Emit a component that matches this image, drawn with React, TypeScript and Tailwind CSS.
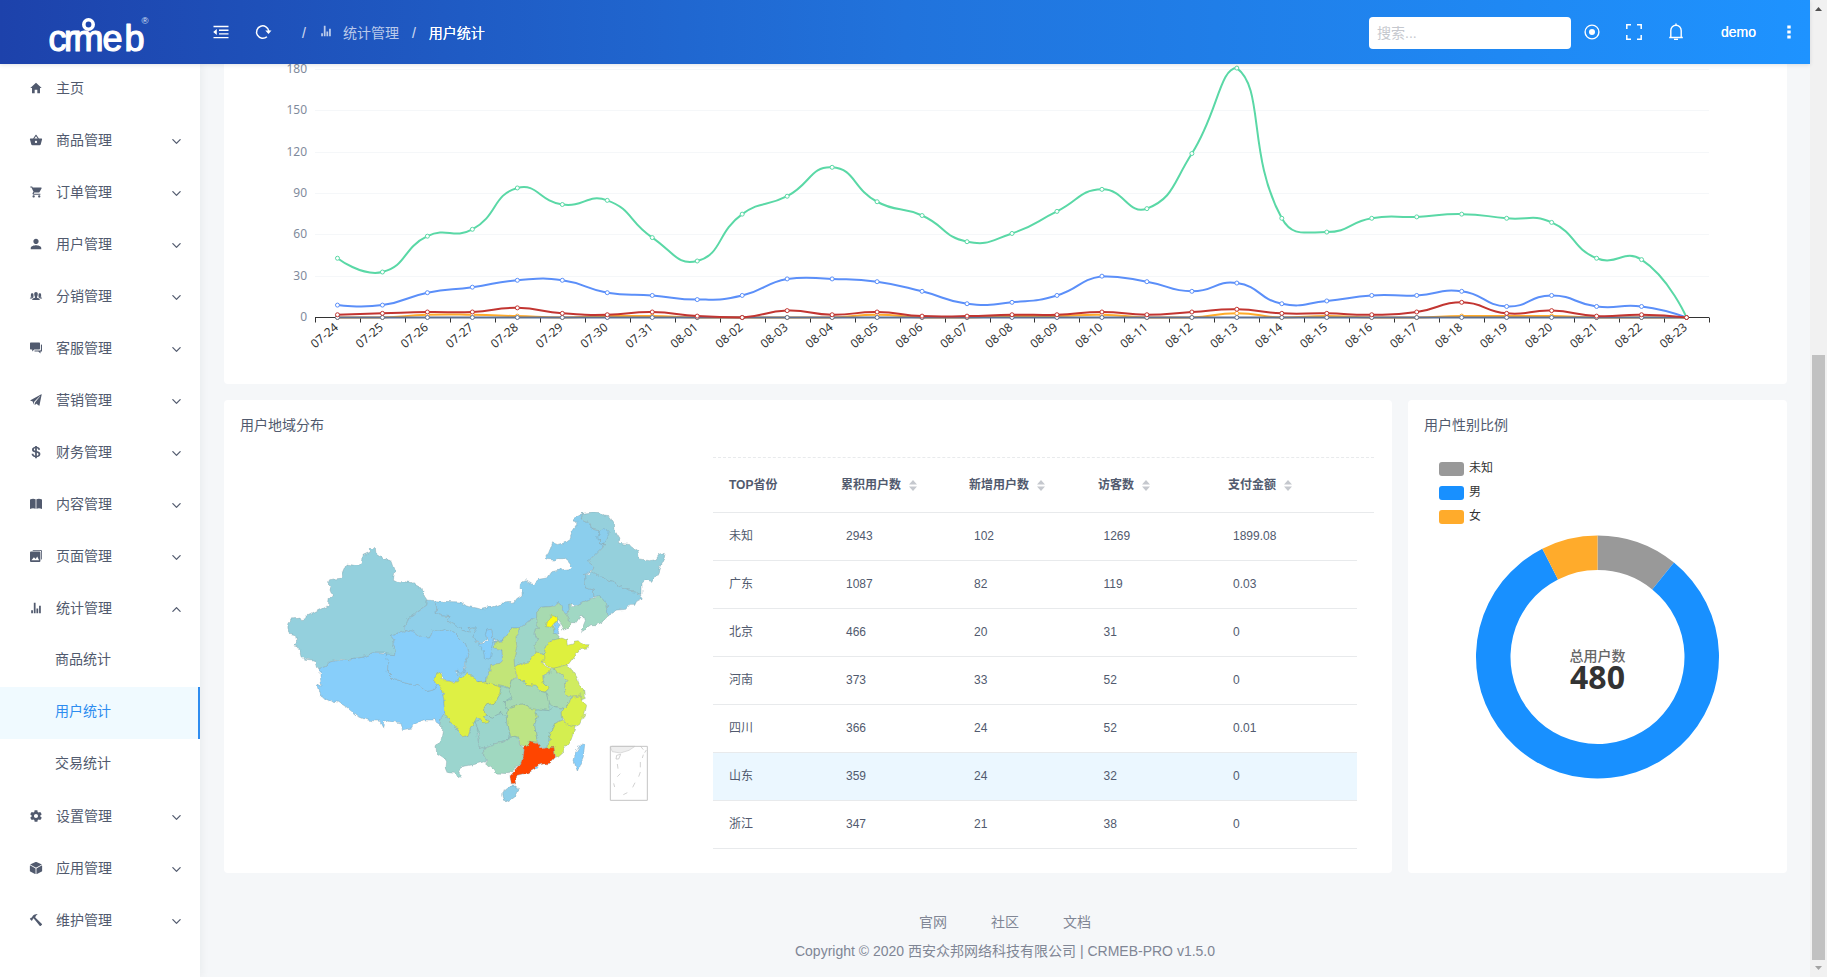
import React from "react";
import {
  IoMdHome,
  IoMdBasket,
  IoMdCart,
  IoMdPerson,
  IoIosPeople,
  IoIosPaperPlane,
  IoLogoUsd,
  IoMdStats,
  IoMdSettings,
  IoMdCube,
  IoMdHammer,
  IoIosArrowDown,
  IoIosArrowUp,
} from "react-icons/io";

type Icon = React.ComponentType<{ className?: string }>;

const ChatIcon: Icon = ({ className }) => (
  <svg viewBox="0 0 14 14" className={className} fill="currentColor">
    <path d="M1.700 1.500h8.600q.7 0 .7.700v5.600q0 .7-.7.700H5.200L3.200 10.400V8.500H1.700Q1 8.500 1 7.800V2.200q0-.7.700-.7z" />
    <path d="M11.900 3.500h.5q.6 0 .6.600v5.800q0 .6-.6.600h-.9v2L9.300 10.500H5.500v-1h5.700q.7 0 .7-.7z" />
  </svg>
);

const BookIcon: Icon = ({ className }) => (
  <svg viewBox="0 0 14 14" className={className} fill="currentColor">
    <path d="M1 2.600Q3.900 1 6.600 2.300v9.500Q3.900 10.500 1 12zM13 2.600Q10.100 1 7.400 2.300v9.500Q10.100 10.500 13 12z" />
  </svg>
);

const AlbumIcon: Icon = ({ className }) => (
  <svg viewBox="0 0 14 14" className={className} fill="currentColor">
    <path d="M4.300 1h7.500Q13 1 13 2.200v7.500q0 .8-.8.900V2.800q0-1-1-1H3.500Q3.600 1 4.300 1z" />
    <path
      fillRule="evenodd"
      d="M2 2.600h8.400q1 0 1 1V12q0 1-1 1H2q-1 0-1-1V3.600q0-1 1-1zm.4 8.600h7.700L8.200 7.600 6.700 10 4.900 8.200z"
    />
  </svg>
);

const menu: { label: string; icon: Icon; open?: boolean; leaf?: boolean }[] = [
  { label: "主页", icon: IoMdHome, leaf: true },
  { label: "商品管理", icon: IoMdBasket },
  { label: "订单管理", icon: IoMdCart },
  { label: "用户管理", icon: IoMdPerson },
  { label: "分销管理", icon: IoIosPeople },
  { label: "客服管理", icon: ChatIcon },
  { label: "营销管理", icon: IoIosPaperPlane },
  { label: "财务管理", icon: IoLogoUsd },
  { label: "内容管理", icon: BookIcon },
  { label: "页面管理", icon: AlbumIcon },
  { label: "统计管理", icon: IoMdStats, open: true },
  { label: "设置管理", icon: IoMdSettings },
  { label: "应用管理", icon: IoMdCube },
  { label: "维护管理", icon: IoMdHammer },
];
const subMenu = ["商品统计", "用户统计", "交易统计"];

function Logo() {
  return (
    <svg width="200" height="64" viewBox="0 0 200 64" className="shrink-0">
      <text
        x="48.500 64 73.500 102.500 124.500"
        y="51"
        fontSize="36"
        fill="#fff"
        stroke="#fff"
        strokeWidth="1.200"
        strokeLinejoin="round"
        className="font-['Liberation_Sans',sans-serif]"
      >
        crmeb
      </text>
      <circle cx="88.500" cy="24.500" r="4.700" fill="none" stroke="#fff" strokeWidth="3.600" />
      <text x="141.500" y="23.500" fontSize="9.500" fill="#dbe3f6" className="font-['Liberation_Sans',sans-serif]">
        ®
      </text>
    </svg>
  );
}

function Header() {
  return (
    <header className="relative z-10 flex h-16 shrink-0 items-center bg-[linear-gradient(90deg,#1d42ab,#2173dc,#1e93ff)] text-sm text-white shadow-[0_1px_4px_rgba(0,21,41,0.12)]">
      <Logo />
      <svg width="16" height="16" viewBox="0 0 16 16" className="ml-[13px] fill-white">
        <path d="M.5 1.800h15v1.400H.5zM6 5.600h9.500v1.300H6zM6 9.200h9.500v1.300H6zM.5 12.900h15v1.400H.5zM.2 8l3.600-2.900v5.800z" />
      </svg>
      <svg width="17" height="16" viewBox="0 0 17 16" className="ml-[26px]">
        <path d="M11.900 12.700A6.200 6.200 0 1 1 13.900 7.200" fill="none" stroke="#fff" strokeWidth="1.500" />
        <path d="M10.300 6.600h6.200l-3 3.500z" fill="#fff" />
      </svg>
      <span className="ml-[30px] pt-0.5 text-white/80">/</span>
      <IoMdStats className="mt-[-3px] ml-[13px] size-[14px] text-white/70" />
      <span className="ml-[10px] pt-0.5 text-white/70">统计管理</span>
      <span className="ml-[13px] pt-0.5 text-white/80">/</span>
      <span className="ml-[13px] pt-0.5 [text-shadow:0_0_.5px_#fff]">用户统计</span>
      <div className="ml-auto flex items-center">
        <div className="mt-0.5 flex h-8 w-[202px] items-center rounded bg-white pl-[8px] text-[#c5c8ce]">搜索...</div>
        <svg width="16" height="16" viewBox="0 0 16 16" className="ml-[13px]">
          <circle cx="8" cy="8" r="6.900" fill="none" stroke="#fff" strokeWidth="1.400" />
          <circle cx="8" cy="8" r="3" fill="#fff" />
        </svg>
        <svg width="16" height="16" viewBox="0 0 16 16" className="ml-[26px] fill-none stroke-white stroke-[1.5]">
          <path d="M.8 5V.8H5M11 .8h4.200V5M15.200 11v4.200H11M5 15.200H.8V11" />
        </svg>
        <svg width="16" height="18" viewBox="0 0 16 18" className="ml-[26px] fill-none stroke-white stroke-[1.4]">
          <path d="M1.200 14.500h13.600M2.800 14.500V7.500a5.200 5.200 0 0 1 10.400 0v7M8 .6v2M6 16.400h4" />
        </svg>
        <span className="ml-[37px] w-[36px] font-['Liberation_Sans',sans-serif] [text-shadow:0_0_.5px_#fff]">demo</span>
        <svg width="4" height="14" viewBox="0 0 4 14" className="mr-[19px] ml-[30px] fill-white">
          <path d="M.3.500h3.400v3H.3zM.3 5.500h3.400v3H.3zM.3 10.500h3.400v3H.3z" />
        </svg>
      </div>
    </header>
  );
}

function Sidebar() {
  return (
    <nav className="z-[5] w-[200px] shrink-0 bg-white text-sm text-[#515a6e] shadow-[2px_0_8px_rgba(29,35,41,0.05)]">
      <div className="-mt-0.5">
        {menu.map(({ label, icon: ItemIcon, open, leaf }) => (
          <React.Fragment key={label}>
            <div className="flex h-[52px] items-center pr-[17px] pl-[29px]">
              <ItemIcon className="size-[14px]" />
              <span className="ml-[13px]">{label}</span>
              {!leaf &&
                (open ? (
                  <IoIosArrowUp className="mt-[3px] ml-auto size-[13px]" />
                ) : (
                  <IoIosArrowDown className="mt-[3px] ml-auto size-[13px]" />
                ))}
            </div>
            {open && (
              <div className="mt-px -mb-px">
                {subMenu.map((s, i) => (
                  <div
                    key={s}
                    className={
                      i === 1
                        ? "flex h-[52px] items-center border-r-2 border-[#2d8cf0] bg-[#f0faff] pb-[5px] pl-[55px] text-[#2d8cf0]"
                        : "flex h-[52px] items-center pb-[5px] pl-[55px]"
                    }
                  >
                    {s}
                  </div>
                ))}
              </div>
            )}
          </React.Fragment>
        ))}
      </div>
    </nav>
  );
}

const dates = [
  "07-24", "07-25", "07-26", "07-27", "07-28", "07-29", "07-30", "07-31",
  "08-01", "08-02", "08-03", "08-04", "08-05", "08-06", "08-07", "08-08",
  "08-09", "08-10", "08-11", "08-12", "08-13", "08-14", "08-15", "08-16",
  "08-17", "08-18", "08-19", "08-20", "08-21", "08-22", "08-23",
];
const series = [
  { color: "#5b8ff9", data: [9, 9, 18, 22, 27, 27, 18, 16, 13, 16, 28, 28, 26, 19, 10, 11, 16, 30, 26, 19, 25, 10, 12, 16, 16, 19, 8, 16, 8, 8, 0] },
  { color: "#5ad8a6", data: [43, 33, 59, 64, 94, 82, 85, 58, 41, 75, 88, 109, 84, 74, 55, 61, 77, 93, 79, 119, 181, 72, 62, 72, 73, 75, 72, 69, 43, 42, 0] },
  { color: "#ffab2b", data: [0, 0, 2, 2, 1, 0, 1, 1, 0, 0, 0, 0, 2, 0, 0, 1, 1, 2, 0, 0, 3, 0, 1, 0, 0, 1, 1, 1, 0, 0, 0] },
  { color: "#5d7092", data: dates.map(() => 0) },
  { color: "#c23531", data: [2, 3, 4, 4, 7, 3, 2, 4, 1, 0, 5, 2, 4, 1, 1, 2, 2, 4, 2, 4, 6, 3, 3, 2, 4, 11, 3, 5, 1, 2, 0] },
];

const AXIS_Y = 317.5;
const AXIS_X0 = 315;
const AXIS_X1 = 1709;
const STEP = (AXIS_X1 - AXIS_X0) / dates.length;
type Pt = [number, number];
const toPoint = (v: number, i: number): Pt => [AXIS_X0 + STEP * (i + 0.5), AXIS_Y - v * 1.378];

/* Cubic curve whose control points follow the neighbouring chord, clamped to the series' bounds. */
function smoothPath(points: Pt[]) {
  const ys = points.map((p) => p[1]);
  const lo = Math.min(...ys);
  const hi = Math.max(...ys);
  const clamp = (y: number) => Math.max(lo, Math.min(hi, y));
  let d = `M${points[0][0]} ${points[0][1]}`;
  let c0: Pt = points[0];
  for (let i = 1; i < points.length; i++) {
    const p = points[i];
    const prev = points[i - 1];
    const next = points[i + 1];
    let c1: Pt = p;
    let nextC0: Pt = p;
    if (next) {
      const v: Pt = [next[0] - prev[0], next[1] - prev[1]];
      const a = Math.hypot(p[0] - prev[0], p[1] - prev[1]);
      const b = Math.hypot(next[0] - p[0], next[1] - p[1]);
      const r = b / (a + b);
      c1 = [p[0] - v[0] * 0.5 * (1 - r), clamp(p[1] - v[1] * 0.5 * (1 - r))];
      nextC0 = [p[0] + v[0] * 0.5 * r, clamp(p[1] + v[1] * 0.5 * r)];
    }
    d += `C${c0[0]} ${c0[1]} ${c1[0]} ${c1[1]} ${p[0]} ${p[1]}`;
    c0 = nextC0;
  }
  return d;
}

function TrendChart() {
  return (
    <svg
      width="1563"
      height="320"
      viewBox="224 64 1563 320"
      className="block font-['Noto_Sans','Noto_Sans_CJK_SC',sans-serif] text-xs"
    >
      {[0, 30, 60, 90, 120, 150, 180].map((v) => {
        const y = Math.round(AXIS_Y - 0.5 - v * 1.378) + 0.5;
        return (
          <g key={v}>
            {v > 0 && <path d={`M${AXIS_X0} ${y}H${AXIS_X1}`} stroke="#f5f7f9" />}
            <text x="307" y={y + 3} textAnchor="end" fill="#7f8b9c">
              {v}
            </text>
          </g>
        );
      })}
      <path d={`M${AXIS_X0} ${AXIS_Y}H${AXIS_X1}`} stroke="#333" />
      {Array.from({ length: dates.length + 1 }, (_, i) => {
        const x = Math.round(AXIS_X0 + i * STEP) + 0.5;
        return <path key={i} d={`M${x} ${AXIS_Y}v5`} stroke="#333" />;
      })}
      {dates.map((t, i) => {
        const x = AXIS_X0 + STEP * (i + 0.5) - 1;
        return (
          <text
            key={t}
            x={x}
            y="329.500"
            textAnchor="end"
            fill="#333"
            transform={`rotate(-40 ${x} 325.500)`}
          >
            {t}
          </text>
        );
      })}
      {series.map(({ color, data }) => {
        const pts = data.map(toPoint);
        return (
          <g key={color} stroke={color}>
            <path d={smoothPath(pts)} fill="none" strokeWidth="2" />
            {pts.map(([x, y]) => (
              <circle key={x} cx={x} cy={y} r="2" fill="#fff" strokeWidth="1" />
            ))}
          </g>
        );
      })}
    </svg>
  );
}

const provinces: [string, string, string][] = [
  ["西藏", "#87cefa", "150,536 168,528 178,516 210,510 240,512 246,505 276,502 312,486 350,490 354,520 352,550 370,568 410,580 450,588 472,604 490,600 496,580 512,590 520,620 526,672 512,684 510,704 498,696 494,682 488,690 460,690 430,704 422,718 398,722 394,700 370,694 354,690 342,694 338,710 330,694 290,690 262,678 230,652 200,632 196,642 182,632 154,620 148,600 144,586 156,590 150,560"],
  ["新疆", "#94d0dd", "53,402 62,388 90,384 95,392 108,390 112,378 175,346 178,325 187,318 180,300 183,288 173,278 176,272 212,268 218,262 216,250 228,222 268,228 274,222 276,196 298,186 298,175 316,176 318,190 344,208 366,214 375,240 370,268 382,274 420,277 456,294 460,310 473,328 470,346 460,352 444,362 428,378 412,384 408,398 404,414 410,420 400,426 362,436 372,450 366,462 376,478 374,494 350,494 340,486 312,486 276,502 246,505 240,512 210,508 178,516 168,528 150,536 140,530 134,510 108,508 96,500 92,482 84,470 72,468 80,454 76,434 58,430 54,416"],
  ["内蒙古", "#8bceed", "490,332 520,334 572,336 590,348 620,354 634,358 660,352 690,340 734,336 740,326 756,316 756,300 750,292 752,278 768,272 788,284 806,268 830,264 842,246 868,240 900,236 906,230 896,216 884,206 862,206 850,210 830,208 828,200 836,188 848,158 864,164 890,156 898,150 908,124 920,106 920,92 912,90 914,82 938,70 934,90 956,98 966,118 988,122 984,140 990,156 1004,162 998,174 980,192 956,216 972,230 962,246 944,254 946,282 950,294 970,300 972,320 958,328 936,336 920,348 904,344 896,346 898,358 888,370 876,360 868,338 850,348 840,350 812,352 800,364 800,384 770,396 748,414 726,414 708,432 702,452 680,456 672,450 664,444 668,430 664,418 652,420 648,450 632,460 612,452 608,436 618,424 614,414 600,416 596,426 578,422 542,400 532,392 540,380 516,378 498,370 500,354"],
  ["甘肃", "#8fcfe9", "473,330 490,332 500,354 498,370 516,378 540,380 532,392 542,400 566,412 578,422 596,426 600,416 614,414 618,424 608,440 618,456 636,462 668,456 678,456 676,474 696,480 698,512 690,520 662,524 660,544 652,556 650,576 624,578 614,564 598,556 590,545 584,560 575,566 564,560 560,540 580,540 586,516 596,494 584,458 556,430 524,420 504,424 488,420 484,434 478,444 452,442 432,426 410,420 404,414 412,384 428,378 444,362 470,346"],
  ["青海", "#87cefa", "362,436 400,426 410,420 432,426 452,442 478,444 484,434 488,420 504,424 524,420 556,430 584,458 596,494 586,516 580,530 582,548 572,550 566,541 556,542 564,556 576,562 568,580 540,574 522,570 512,548 496,550 494,576 500,584 490,600 472,604 450,588 410,580 370,568 352,550 354,520 348,500 350,492 374,494 376,478 366,462 372,450"],
  ["黑龙江", "#95d0dc", "938,70 970,66 990,68 1002,78 1018,80 1030,100 1032,120 1044,140 1050,160 1080,164 1104,182 1108,206 1138,212 1158,208 1166,196 1186,190 1178,216 1170,230 1164,248 1148,274 1126,270 1116,280 1116,312 1104,312 1098,304 1072,300 1054,288 1042,292 1034,274 1014,272 1002,264 982,256 976,248 966,244 972,230 956,216 980,192 998,174 1004,162 990,156 984,140 988,122 966,118 956,98 934,90"],
  ["加格达奇", "#8bceed", "988,122 1002,114 1018,124 1016,134 1006,148 1002,160 992,158 990,148 982,150 980,140 988,136"],
  ["吉林", "#8fcfe4", "944,254 962,252 966,244 976,248 982,256 1002,264 1014,272 1034,274 1042,292 1054,288 1072,300 1098,304 1104,312 1116,314 1112,330 1100,334 1094,346 1080,346 1070,358 1040,360 1014,378 1006,340 988,318 972,320 970,300 950,294 946,282"],
  ["辽宁", "#a0d8c4", "896,342 904,344 904,356 920,348 936,336 958,328 988,318 1000,326 1006,340 1014,378 1008,388 980,404 966,404 932,428 936,416 946,392 944,380 930,380 918,398 904,398 888,370 898,358"],
  ["河北", "#a7dab0", "800,364 812,352 840,350 852,348 868,338 876,360 888,370 904,398 892,416 880,420 872,404 862,392 852,404 852,424 868,436 866,446 840,452 826,474 822,492 794,490 794,466 802,446 792,430 796,416 808,412 800,400"],
  ["天津", "#87cefa", "852,412 858,396 868,404 864,416 870,432 852,430"],
  ["北京", "#fcfc14", "826,410 828,398 840,388 844,376 858,380 860,394 852,404 846,412"],
  ["山西", "#9dd6c9", "748,414 770,396 800,384 800,400 808,412 796,416 792,430 802,446 794,466 794,490 780,514 734,530 732,500 740,470 738,440 746,430"],
  ["陕西", "#c2e578", "748,414 746,430 738,440 740,470 732,500 734,530 742,566 724,570 716,600 700,590 680,586 662,582 650,576 652,556 660,544 662,524 690,520 698,512 696,480 676,474 678,456 702,452 708,432 726,414"],
  ["宁夏", "#87cefa", "650,420 664,418 668,430 664,444 672,450 668,474 664,488 660,510 644,508 640,482 626,464 640,460 652,452 646,436"],
  ["河南", "#e0f23f", "734,530 780,514 794,490 822,492 826,504 816,516 826,528 842,536 838,550 816,562 820,580 832,590 830,606 812,604 798,586 770,584 744,568"],
  ["山东", "#def03e", "826,474 840,452 864,446 876,444 890,450 892,466 908,462 912,454 928,452 940,464 958,464 952,474 930,476 912,500 894,524 872,530 852,536 834,530 826,520 816,516 826,504 822,492"],
  ["安徽", "#a8dab4", "842,536 852,534 862,548 880,556 890,572 884,584 890,610 904,622 898,638 882,656 854,650 838,640 832,610 830,590 820,580 816,562 838,550"],
  ["江苏", "#d0ec60", "852,534 872,530 894,524 904,538 920,560 928,580 940,596 944,612 930,618 904,622 890,610 884,584 890,572 880,556 862,548"],
  ["上海", "#c5e870", "930,608 944,600 946,622 932,628"],
  ["浙江", "#d9f04a", "904,622 930,618 938,634 950,646 944,672 932,700 916,710 886,700 876,680 876,660 898,638"],
  ["湖北", "#a6d9b4", "716,600 724,570 742,568 770,584 798,586 812,604 832,610 838,640 836,662 806,656 790,660 776,654 766,644 740,648 716,656 702,648 704,634 726,626 716,608"],
  ["重庆", "#a0d8c0", "694,592 716,600 726,620 704,634 702,648 716,656 710,688 696,668 684,670 664,682 648,676 640,660 650,644 672,640 692,610"],
  ["贵州", "#9bd5cc", "614,694 634,690 646,674 664,682 684,670 696,668 712,688 716,712 720,738 702,756 670,762 644,772 628,776 622,740 628,728"],
  ["云南", "#9bd5ce", "512,684 526,672 538,684 540,696 554,706 568,730 578,740 594,736 600,718 614,694 622,710 622,740 628,776 650,770 634,790 652,806 640,816 610,824 572,830 566,842 574,852 570,860 556,850 536,848 528,830 530,812 500,792 498,768 514,748 518,716 510,704"],
  ["四川", "#def044", "494,576 496,550 506,544 514,556 512,564 524,572 540,574 556,580 568,562 584,560 590,545 598,556 614,564 624,578 650,576 662,582 694,592 692,610 672,640 650,644 640,660 648,676 640,680 656,694 640,698 630,684 620,682 614,694 606,708 600,718 594,736 578,740 568,730 554,706 540,696 538,684 526,676 520,620 512,590 500,584"],
  ["湖南", "#bde484", "712,688 716,656 740,648 766,644 776,654 796,658 802,680 794,704 802,758 780,760 770,772 750,764 742,740 722,740 716,712"],
  ["江西", "#9dd6cc", "796,664 806,660 836,662 854,650 882,656 876,664 878,690 856,700 846,720 838,744 834,774 812,772 802,758 794,704 802,680"],
  ["福建", "#d4ee50", "878,690 886,700 916,710 908,736 900,758 880,782 858,802 852,780 834,774 838,744 846,720 856,700"],
  ["广西", "#a0d8c0", "634,790 650,770 670,762 702,756 716,744 736,738 750,764 762,774 760,800 750,824 720,848 716,854 680,852 668,834 646,816 652,806"],
  ["广东", "#ff4500", "764,768 780,756 810,762 812,776 852,772 856,802 840,820 806,824 796,836 776,848 744,856 732,866 734,882 724,884 720,858 750,826 760,800"],
  ["海南", "#8fcfe9", "698,912 704,896 716,888 738,888 744,900 736,920 716,936 702,930"],
  ["台湾", "#87cefa", "944,764 940,800 922,844 912,810 916,788 930,766 938,762"],
];

function ChinaMap() {
  return (
    <svg width="410" height="320" viewBox="0 0 1230 960" className="mt-[33px] shrink-0">
      <defs>
        <filter id="coast" x="0" y="0" width="100%" height="100%" colorInterpolationFilters="sRGB">
          <feTurbulence type="fractalNoise" baseFrequency="0.05" numOctaves="2" seed="4" />
          <feDisplacementMap in="SourceGraphic" scale="16" xChannelSelector="R" yChannelSelector="G" />
        </filter>
      </defs>
      <g filter="url(#coast)" stroke="#7f9aa0" strokeOpacity=".7" strokeWidth="1.600" strokeLinejoin="round">
        <path d="M600 570h260v180h-220l-60-60z" fill="#9bd5cc" stroke="none" />
        {provinces.map(([name, color, points]) => (
          <polygon key={name} points={points} fill={color} />
        ))}
      </g>
      <path d="M794 830h12l-4 6h-6z" fill="#87cefa" />
      <path d="M1021 772l6-3h68l-18 12-26 8-24-4z" fill="#eee" stroke="#ccc" strokeWidth="2" />
      <path d="M1021 769h111v162h-111z" fill="none" stroke="#c4c4c4" strokeWidth="3" />
      <path
        d="M1040 796l12-3-6 14h-8zM1042 822l2 14M1042 860l9-9M1031 880l3 11M1060 914l12-6M1088 892l7-14M1106 860l5-14M1111 832v-16M1117 804l3-10M1124 788l5-8M1112 769l8 10"
        fill="none"
        stroke="#bbb"
        strokeWidth="2"
      />
    </svg>
  );
}

const rows = [
  ["未知", "2943", "102", "1269", "1899.08"],
  ["广东", "1087", "82", "119", "0.03"],
  ["北京", "466", "20", "31", "0"],
  ["河南", "373", "33", "52", "0"],
  ["四川", "366", "24", "52", "0.01"],
  ["山东", "359", "24", "32", "0"],
  ["浙江", "347", "21", "38", "0"],
];
const columns = ["TOP省份", "累积用户数", "新增用户数", "访客数", "支付金额"];

function ProvinceTable() {
  return (
    <div className="ml-[33px] w-[661px] text-xs text-[#515a6e]">
      <div className="grid h-14 grid-cols-[112px_128px_129px_130px_1fr] items-center border-t border-b border-t-[#e8eaec] border-b-[#e8eaec] [border-top-style:dashed]">
        {columns.map((c, i) => (
          <div key={c} className="flex items-center pl-4 font-bold">
            {c}
            {i > 0 && (
              <svg width="8" height="11" viewBox="0 0 8 11" className="ml-[8px] fill-[#c5c8ce]">
                <path d="M4 0l4 4.500H0zM4 11l4-4.500H0z" />
              </svg>
            )}
          </div>
        ))}
      </div>
      {rows.map((row) => (
        <div
          key={row[0]}
          className={
            row[0] === "山东"
              ? "grid h-12 w-[644px] grid-cols-[117px_128px_129.500px_129.500px_1fr] items-center border-b border-[#e8eaec] bg-[#ebf7ff] pb-0.5"
              : "grid h-12 w-[644px] grid-cols-[117px_128px_129.500px_129.500px_1fr] items-center border-b border-[#e8eaec] pb-0.5"
          }
        >
          {row.map((cell, i) => (
            <div key={i} className="pl-4">
              {cell}
            </div>
          ))}
        </div>
      ))}
    </div>
  );
}

const gender = [
  { name: "未知", value: 52, color: "#999999" },
  { name: "男", value: 392, color: "#1890ff" },
  { name: "女", value: 36, color: "#ffab2b" },
];

function arcPath(from: number, to: number) {
  const at = (r: number, t: number) =>
    `${(125.5 + r * Math.sin(t * 2 * Math.PI)).toFixed(2)} ${(125 - r * Math.cos(t * 2 * Math.PI)).toFixed(2)}`;
  const big = to - from > 0.5 ? 1 : 0;
  return `M${at(121.5, from)}A121.500 121.500 0 ${big} 1 ${at(121.5, to)}L${at(87, to)}A87 87 0 ${big} 0 ${at(87, from)}Z`;
}

function GenderRing() {
  const total = gender.reduce((sum, g) => sum + g.value, 0);
  let acc = 0;
  return (
    <svg
      width="250"
      height="250"
      viewBox="0 0 250 250"
      className="mt-[3px] ml-[64px] font-['Noto_Sans','Noto_Sans_CJK_SC',sans-serif]"
    >
      {gender.map((g) => {
        const from = acc / total;
        acc += g.value;
        return <path key={g.name} d={arcPath(from, acc / total)} fill={g.color} />;
      })}
      <text x="125.500" y="129" textAnchor="middle" fontSize="14" fontWeight="500" fill="#666">
        总用户数
      </text>
      <text x="125.500" y="157" textAnchor="middle" fontSize="32" fontWeight="700" fill="#333">
        {total}
      </text>
    </svg>
  );
}

function Scrollbar() {
  return (
    <div className="flex w-[17px] shrink-0 flex-col items-center bg-[#f1f1f1]">
      <svg width="17" height="17" viewBox="0 0 17 17">
        <path d="M5 11l3.500-4 3.500 4z" fill="#505050" />
      </svg>
      <div className="mt-[338px] w-[13px] flex-1 bg-[#c1c1c1]" />
      <svg width="17" height="17" viewBox="0 0 17 17">
        <path d="M5 6l3.500 4 3.500-4z" fill="#a3a3a3" />
      </svg>
    </div>
  );
}

export default function App() {
  return (
    <div className="flex h-[977px] w-[1827px] overflow-hidden bg-[#f5f7f9] font-['Liberation_Sans','Noto_Sans_CJK_SC',sans-serif]">
      <div className="flex w-[1810px] flex-col">
        <Header />
        <div className="flex flex-1">
          <Sidebar />
          <main className="flex-1 pr-6 pl-6">
            <section className="h-[320px] overflow-hidden rounded-b bg-white">
              <TrendChart />
            </section>
            <div className="mt-4 flex h-[473px] gap-4">
              <section className="w-[1168px] rounded bg-white">
                <h2 className="h-[57px] pt-[15px] pl-4 text-sm text-[#515a6e]">用户地域分布</h2>
                <div className="flex pl-[46px]">
                  <ChinaMap />
                  <ProvinceTable />
                </div>
              </section>
              <section className="flex-1 rounded bg-white">
                <h2 className="h-[57px] pt-[15px] pl-4 text-sm text-[#515a6e]">用户性别比例</h2>
                <ul className="pl-[31px] font-['Noto_Sans','Noto_Sans_CJK_SC',sans-serif] text-xs text-[#333]">
                  {gender.map((g) => (
                    <li key={g.name} className="flex h-6 items-center">
                      <span className="h-[14px] w-[25px] rounded-[3px]" style={{ background: g.color }} />
                      <span className="-mt-0.5 ml-[5px]">{g.name}</span>
                    </li>
                  ))}
                </ul>
                <GenderRing />
              </section>
            </div>
            <footer className="mt-[39px] flex flex-col items-center pr-px text-sm leading-5 text-[#808695]">
              <div className="flex gap-11">
                <span>官网</span>
                <span>社区</span>
                <span>文档</span>
              </div>
              <p className="mt-[9px]">Copyright © 2020 西安众邦网络科技有限公司 | CRMEB-PRO v1.5.0</p>
            </footer>
          </main>
        </div>
      </div>
      <Scrollbar />
    </div>
  );
}
